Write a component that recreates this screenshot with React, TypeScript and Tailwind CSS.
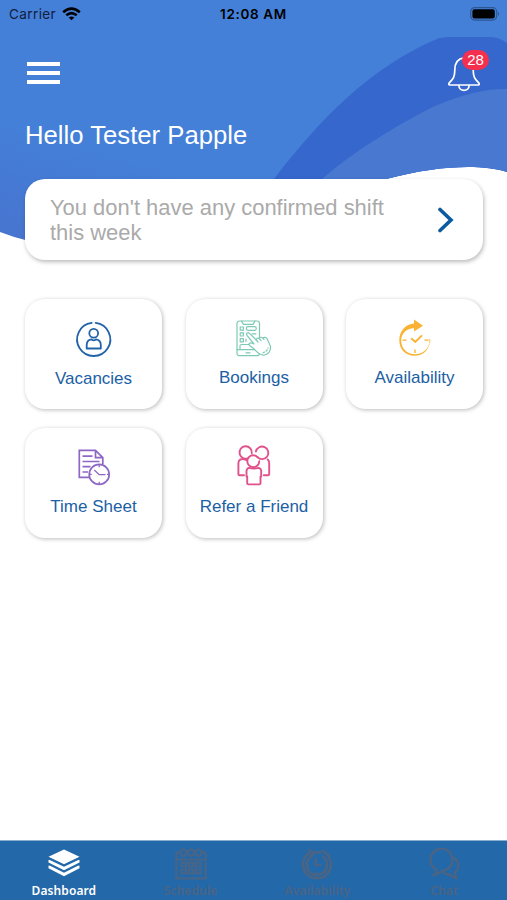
import type { ReactNode } from 'react';

const WaveBackground = () => (
  <svg className="absolute inset-x-0 top-0" width="507" height="250" viewBox="0 0 507 250" fill="none">
    <defs>
      <linearGradient id="sky" x1="60" y1="140" x2="30" y2="245" gradientUnits="userSpaceOnUse">
        <stop offset="0" stopColor="#447fd8" />
        <stop offset="1" stopColor="#4774cf" />
      </linearGradient>
    </defs>
    <path d="M0 0H507V172C482 164 438 165 386 179L300 220L60 246Q28 243 0 232Z" fill="url(#sky)" />
    <path d="M274 179C318 122 368 68 438 38.5Q444 37 450 37H492Q500 38 507 43V172C482 164 438 165 386 179Z" fill="#3667cd" />
    <path d="M322 179C353 152 395 126 435 106Q477 88 507 89V172C482 164 438 165 386 179Z" fill="#4878cf" />
  </svg>
);

const StatusBar = () => (
  <div className="grid h-7 grid-cols-3 items-center pl-[9px] pr-[7px] text-[13.5px] text-black">
    <div className="flex items-center gap-[6px]">
      <span className="text-[#10203c] tracking-[0.4px]">Carrier</span>
      <svg width="19" height="14" viewBox="0 0 19 14" fill="none" stroke="#000" strokeWidth="2.6">
        <path d="M1.2 5.2Q9.5 -2 17.8 5.2" />
        <path d="M4.3 8.3Q9.5 3.8 14.7 8.3" />
        <path d="M9.5 13.2L6.7 10.5Q9.5 8.4 12.3 10.5Z" fill="#000" stroke="none" />
      </svg>
    </div>
    <div className="-ml-[2px] text-center font-semibold tracking-[0.65px]">12:08 AM</div>
    <svg className="justify-self-end" width="30" height="14" viewBox="0 0 30 14">
      <rect x="0.7" y="0.7" width="26" height="12.4" rx="4" fill="none" stroke="#2d5793" strokeWidth="1.2" />
      <rect x="2.4" y="2.3" width="22.4" height="9.2" rx="2.2" />
      <path d="M28 4.8Q30 7 28 9Z" fill="#2d5793" />
    </svg>
  </div>
);

const VacanciesIcon = () => (
  <svg className="overflow-visible" width="36" height="36" viewBox="0 0 36 36" fill="none" stroke="#2163a8" strokeWidth="1.8">
    <path d="M19.7 1.9A16.6 16.6 0 1 1 15.7 1.9" strokeLinecap="round" />
    <circle cx="17.7" cy="12.3" r="4.4" />
    <path d="M10.7 27.5V24C10.7 20.5 13 18.8 15.3 18.4Q17.7 20.4 20.1 18.4C22.4 18.8 24.8 20.5 24.8 24V27.5Z" strokeLinejoin="round" />
  </svg>
);

const BookingsIcon = () => (
  <svg className="overflow-visible" width="36" height="36" viewBox="0 0 36 36" fill="none" stroke="#7fcab4" strokeWidth="1.2" strokeLinecap="round" strokeLinejoin="round">
    <rect x="1" y="0" width="22.5" height="34.7" rx="2.5" />
    <path d="M5.5 .2L7.5 3.3H17L19 .2M1 28.7H23M10 31.8H14" />
    <rect x="4.2" y="6" width="3.2" height="3.2" />
    <rect x="4.2" y="11.8" width="3.2" height="3.2" />
    <rect x="4.2" y="17.6" width="3.2" height="3.2" />
    <rect x="10.3" y="5.7" width="10" height="3.7" rx="1.8" />
    <path d="M16 12.8H20M4 28V25Q4 23.5 5.5 23.5H15M10 18V20.5" />
    <path d="M18 27.8L13.6 24.5C12.2 23.2 13.7 21.5 15.4 22L18 23L11 14.3C9.7 12.5 12 10.8 13.5 12.3L20.3 19C20 17.2 22 16.5 23.4 17.7C23.7 16 25.7 15.7 27 17.2C28 15.8 30.3 16.2 31.3 18.3C32.4 21 33.4 22.4 34.5 25.5C34.8 29.4 32.5 32.8 28.5 34C25 34.7 21.4 31.8 18 27.8Z" fill="#fff" />
    <path d="M20.3 19L22 21M23.4 17.7L25 19.5M27 17.2L28 18.5" />
    <path d="M27 31.8Q31 30.3 32 26.8" strokeDasharray="1.5 2" />
  </svg>
);

const AvailabilityIcon = () => (
  <svg className="overflow-visible" width="36" height="36" viewBox="0 0 36 36" fill="none" stroke="#f9b233">
    <path d="M17 -1.5L26 4.7L17 10.6V7.2C9.5 7.3 4.2 12.4 4.2 19.5C4.2 28 10.2 33.2 18 33.2C25.2 33.2 30.6 29 32 23L32.5 23.3C30.5 30.5 25 34.8 17.8 34.8C8.5 34.8 2.3 28.4 2.3 19.3C2.3 10 8.8 3.2 17 2.6Z" fill="#f9b233" stroke="none" />
    <path d="M32.6 22.4Q33.2 20.4 32.7 18" strokeWidth=".8" />
    <path d="M14.2 17.2L18.3 21L25 14.4" strokeWidth="1.9" />
    <path d="M5.5 19.2H9.5M27.5 19.2H31.5M18 28.4V32" strokeWidth="1.3" />
  </svg>
);

const TimeSheetIcon = () => (
  <svg className="overflow-visible" width="36" height="36" viewBox="0 0 36 36" fill="none" stroke="#8d67c5" strokeWidth="1.7">
    <path d="M13 27.3H3.3V.4H19.5L26.8 7.7V14.3M19.5 .8V7.7H26.5" />
    <path d="M6.5 6.2H16.5M6.5 11.5H23.5M6.5 16.7H14.5M6.5 22H12" />
    <circle cx="23.2" cy="24.4" r="10" />
    <path d="M18.3 20L23.2 24.7H29.5M23.2 15V17.2M23.2 31.7V34M13.7 24.4H15.7M31 24.4H32.8" strokeWidth="1.3" />
  </svg>
);

const ReferIcon = () => (
  <svg className="overflow-visible" width="36" height="36" viewBox="0 0 36 36" fill="none" stroke="#e0528c" strokeWidth="1.9" strokeLinecap="round" strokeLinejoin="round">
    <path d="M12.4 8A6.2 6.2 0 1 1 15.8 3.4" />
    <path d="M19.9 1.5A6.3 6.3 0 1 1 21.5 7.2" />
    <path d="M23.3 11.3A6 6 0 1 1 17.3 5.2Q19.8 5.2 21.5 7.2" />
    <path d="M4.3 9.5Q2.4 10.8 2.4 13V24.2Q2.4 25.3 3.5 25.3H8M4.3 9.5Q7 8.4 10.5 10.2" />
    <path d="M31.7 9.5Q33.2 11 33.2 13V24.2Q33.2 25.3 32 25.3H27.8" />
    <path d="M13 17.8Q10.5 18.5 10.5 21V26.5H11.2V33.2Q11.2 34.4 12.4 34.4H23.3Q24.5 34.4 24.5 33.2V26.5H25.2V21Q25.2 18.5 22.5 17.8Q18 19.2 13 17.8Z" />
  </svg>
);

const cards: { label: string; icon: ReactNode; low?: boolean }[] = [
  { label: 'Vacancies', icon: <VacanciesIcon />, low: true },
  { label: 'Bookings', icon: <BookingsIcon /> },
  { label: 'Availability', icon: <AvailabilityIcon /> },
  { label: 'Time Sheet', icon: <TimeSheetIcon /> },
  { label: 'Refer a Friend', icon: <ReferIcon /> },
];

const DashboardIcon = () => (
  <svg width="32" height="32" viewBox="0 0 32 32" fill="#fff">
    <path d="M16 1.5L31.5 8.8L16 16.3L.5 8.8Z" />
    <path d="M.5 12L3 11.2L16 17.8L29 11.2L31.5 12V14.5L16 22.2L.5 14.5Z" />
    <path d="M.5 17.8L3 16.8L16 23.6L29 16.8L31.5 17.8V20.3L16 28.3L.5 20.3Z" />
    <path d="M.5 10.4L16 17.8L31.5 10.4M.5 16.1L16 23.8L31.5 16.1" fill="none" stroke="#2368a8" strokeWidth="1.7" />
  </svg>
);

const ScheduleIcon = () => (
  <svg width="32" height="32" viewBox="0 0 32 32" fill="none" stroke="#4b6484" strokeWidth="2">
    <path d="M5 4.5H1.3V30.5H30.7V4.5H27M1.3 11.5H30.7" />
    <circle cx="8.5" cy="4.8" r="3.2" />
    <circle cx="16" cy="4.8" r="3.2" />
    <circle cx="23.5" cy="4.8" r="3.2" />
    <path d="M6.5 14.5H11V18.5H6.5ZM13.7 14.5H18.3V18.5H13.7ZM21 14.5H25.5V18.5H21ZM6.5 21.5H11V25.5H6.5ZM13.7 21.5H18.3V25.5H13.7ZM21 21.5H25.5V25.5H21Z" />
  </svg>
);

const ClockIcon = () => (
  <svg width="32" height="32" viewBox="0 0 32 32" fill="none" stroke="#4b6484" strokeWidth="2.6">
    <path d="M9 4.2A14 14 0 1 0 23 4.2M13 7A10.2 10.2 0 1 0 21.5 8.2" />
    <path d="M7.5 1.5L12 4.5L9 9M11 4.5H20M21 2.5L28 7M14.7 10V17H20" />
    <path d="M5 17H8M24 17H27M16 24V28" strokeWidth="1.5" />
  </svg>
);

const ChatIcon = () => (
  <svg width="32" height="32" viewBox="0 0 32 32" fill="none" stroke="#4b6484" strokeWidth="2.4" strokeLinejoin="round">
    <path d="M8 21.2A11 11 0 1 1 15.5 22.5L5.5 27.5Q8.8 24.5 8 21.2Z" />
    <path d="M24 9.5C30.5 11 33 19 27 24.2Q26.5 27 28.5 30.2Q24 29 21 26.5Q17 26.5 14.5 24" />
  </svg>
);

const tabs = [
  { label: 'Dashboard', icon: <DashboardIcon />, active: true },
  { label: 'Schedule', icon: <ScheduleIcon />, active: false },
  { label: 'Availability', icon: <ClockIcon />, active: false },
  { label: 'Chat', icon: <ChatIcon />, active: false },
];

const App = () => {
  return (
    <div className="relative flex h-[900px] w-[507px] flex-col overflow-hidden bg-white font-['Liberation_Sans',sans-serif]">
      <WaveBackground />

      <header className="relative font-[Inter,sans-serif]">
        <StatusBar />
        <div className="flex items-start justify-between pl-[27px] pr-[26px] pt-[34px]">
          <button className="flex w-[33px] flex-col gap-[5px]" aria-label="Menu">
            <span className="h-1 w-full bg-white" />
            <span className="h-1 w-full bg-white" />
            <span className="h-1 w-full bg-white" />
          </button>
          <button className="relative -mt-[6px]" aria-label="Notifications">
            <svg width="34" height="37" viewBox="0 0 34 37" fill="none" stroke="#fff" strokeWidth="1.7" strokeLinejoin="round">
              <path d="M17 1.8C10.5 2.6 7.8 7.5 7.8 14C7.8 20.5 6.5 22.7 2.3 26.8Q1 28.9 3 29H31Q33 28.9 31.7 26.8C27.5 22.7 26.2 20.5 26.2 14C26.2 7.5 23.5 2.6 17 1.8Z" />
              <path d="M11.8 29.2C12 36 22 36 22.2 29.2" />
            </svg>
            <span className="absolute -top-[6px] left-[15px] flex h-[20px] w-[27px] items-center justify-center rounded-full bg-[#f5304f] font-['Liberation_Sans',sans-serif] text-[15px] text-white">28</span>
          </button>
        </div>
      </header>

      <main className="relative flex-1 pl-[25px] pr-6">
        <h1 className="mt-[27px] text-[25.7px] leading-[30px] text-white">Hello Tester Papple</h1>

        <section className="mt-[29px] flex h-[81px] items-center justify-between rounded-[20px] bg-white pl-[25px] pr-[29px] shadow-[1px_2px_4px_rgba(0,0,0,0.27)]">
          <p className="w-[350px] text-[21.95px] leading-[25px] text-[#aaaaaa]">You don't have any confirmed shift this week</p>
          <svg width="17" height="26" viewBox="0 0 17 26" fill="none" stroke="#0c5aa0" strokeWidth="3.6" strokeLinecap="round">
            <path d="M3 2.5L14 13L3 23.5" />
          </svg>
        </section>

        <div className="mt-[39px] grid grid-cols-3 gap-x-[23.5px] gap-y-[19px]">
          {cards.map((card) => (
            <div key={card.label} className="flex h-[110px] flex-col items-center rounded-[20px] bg-white pt-[22px] shadow-[1px_1px_4px_rgba(0,0,0,0.27)]">
              {card.icon}
              <span className={`whitespace-nowrap text-[17px] leading-5 text-[#1b60a5] ${card.low ? 'mt-[12px]' : 'mt-[11px]'}`}>{card.label}</span>
            </div>
          ))}
        </div>
      </main>

      <nav className="grid h-[60px] grid-cols-4 border-t border-[#8aaed0] bg-[#2368a8] font-['Noto_Sans',sans-serif]">
        {tabs.map((tab) => (
          <div key={tab.label} className="flex flex-col items-center pl-px pt-[7px]">
            {tab.icon}
            <span className={`mt-[3px] text-[12px] font-semibold leading-[15px] tracking-[0.1px] ${tab.active ? 'text-white' : 'text-[#4b6484]'}`}>{tab.label}</span>
          </div>
        ))}
      </nav>
    </div>
  );
};

export default App;
